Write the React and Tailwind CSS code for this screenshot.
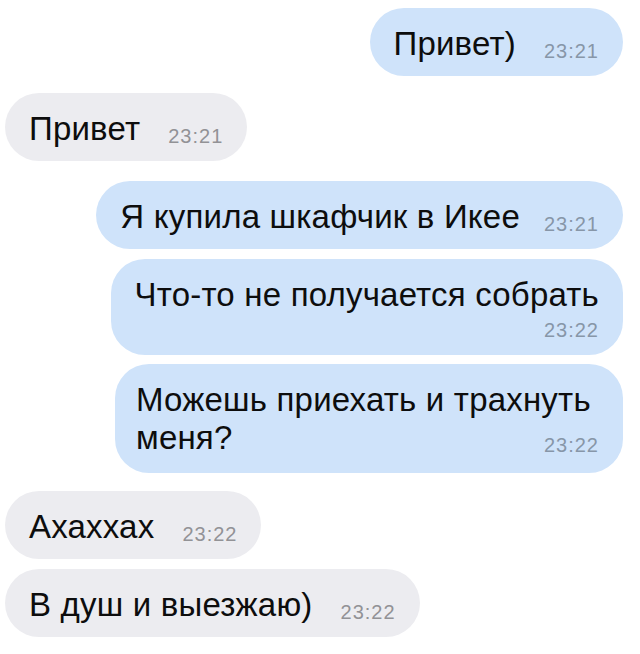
const messages = [
  { id: 1, out: true, lines: ['Привет)'], time: '23:21', mt: 'mt-[8px]' },
  { id: 2, out: false, lines: ['Привет'], time: '23:21', mt: 'mt-[17px]' },
  { id: 3, out: true, lines: ['Я купила шкафчик в Икее'], time: '23:21', mt: 'mt-[20px]', gap: 'gap-[24px]' },
  { id: 4, out: true, lines: ['Что-то не получается собрать'], time: '23:22', mt: 'mt-[10px]', timeBelow: true },
  { id: 5, out: true, lines: ['Можешь приехать и трахнуть', 'меня?'], time: '23:22', mt: 'mt-[9px]', pad: 'w-[508px] pl-[21px] pr-[24px] pb-[16px]' },
  { id: 6, out: false, lines: ['Ахаххах'], time: '23:22', mt: 'mt-[18px]' },
  { id: 7, out: false, lines: ['В душ и выезжаю)'], time: '23:22', mt: 'mt-[10px]' },
]

function Time({ out, children }) {
  return (
    <span
      className={`shrink-0 text-[20px] leading-[24px] tracking-[1px] ${
        out ? 'text-[#8796a8]' : 'text-[#929296]'
      }`}
    >
      {children}
    </span>
  )
}

function Bubble({ msg }) {
  const last = msg.lines[msg.lines.length - 1]
  const first = msg.lines.slice(0, -1)
  const pad = msg.pad || 'pl-[24px] pr-[24px] pb-[13px]'
  const gap = msg.gap || 'gap-[28px]'
  return (
    <div
      className={`${msg.mt} ${pad} ${msg.out ? 'self-end bg-[#cfe3fa]' : 'self-start bg-[#ececf0]'} rounded-[34px] pt-[17px]`}
    >
      {first.map((line) => (
        <div key={line} className="leading-[38px]">{line}</div>
      ))}
      {msg.timeBelow ? (
        <>
          <div className="leading-[38px]">{last}</div>
          <div className="mt-[4px] flex justify-end">
            <Time out={msg.out}>{msg.time}</Time>
          </div>
        </>
      ) : (
        <div className={`flex items-end justify-between ${gap}`}>
          <span className="leading-[38px]">{last}</span>
          <Time out={msg.out}>{msg.time}</Time>
        </div>
      )}
    </div>
  )
}

export default function App() {
  return (
    <div
      className="flex h-[654px] w-[640px] flex-col overflow-hidden bg-white pl-[5px] pr-[17px] text-[33px] tracking-[0.2px] text-[#0d0d0d]"
      style={{ fontFamily: '"Liberation Sans", Arial, sans-serif' }}
    >
      {messages.map((msg) => (
        <Bubble key={msg.id} msg={msg} />
      ))}
    </div>
  )
}
